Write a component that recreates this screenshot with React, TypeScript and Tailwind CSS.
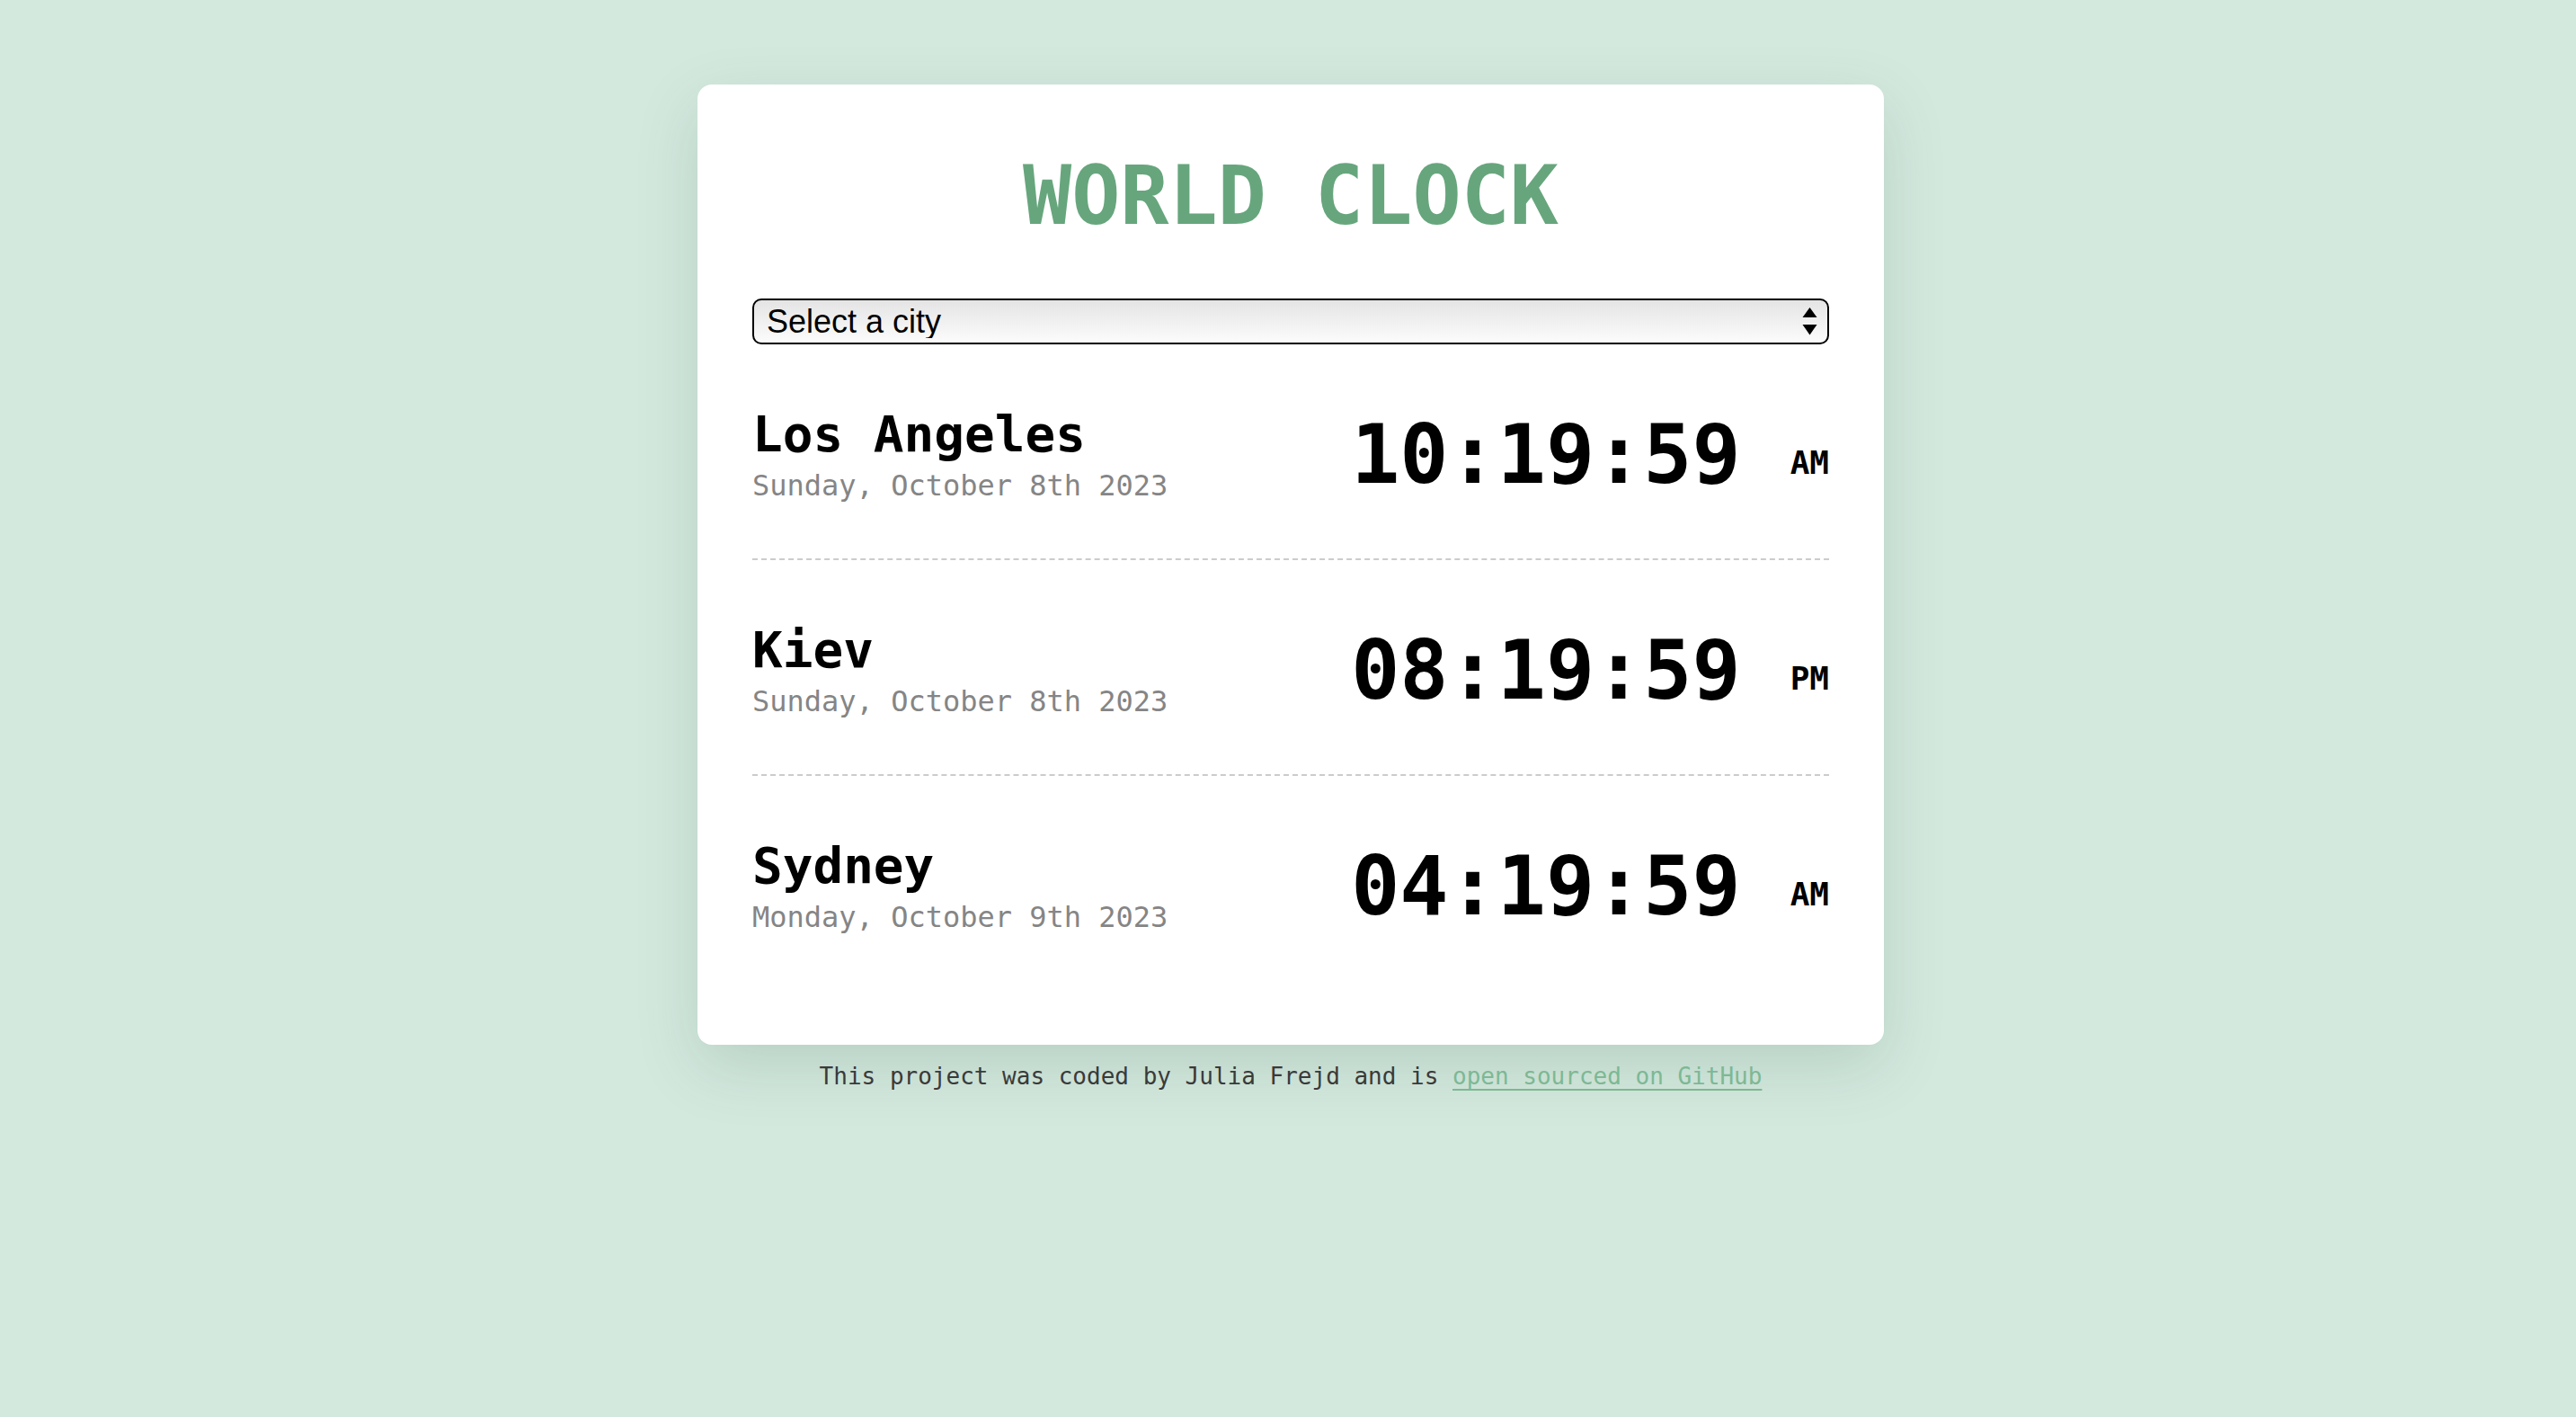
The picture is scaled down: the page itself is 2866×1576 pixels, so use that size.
import { useState } from 'react';

type City = {
  name: string;
  date: string;
  time: string;
  meridiem: 'AM' | 'PM';
};

// Fixed snapshot of the clocks, as shown in the screenshot.
const cities: City[] = [
  { name: 'Los Angeles', date: 'Sunday, October 8th 2023', time: '10:19:59', meridiem: 'AM' },
  { name: 'Kiev', date: 'Sunday, October 8th 2023', time: '08:19:59', meridiem: 'PM' },
  { name: 'Sydney', date: 'Monday, October 9th 2023', time: '04:19:59', meridiem: 'AM' },
];

const mono = "font-['DejaVu_Sans_Mono','Liberation_Mono',monospace]";

function CitySelect() {
  const [value, setValue] = useState('');

  return (
    <div className="relative mt-[60px] h-[51px]">
      <select
        value={value}
        onChange={(e) => setValue(e.target.value)}
        className="h-full w-full appearance-none rounded-[10px] border-2 border-black bg-gradient-to-b from-[#e4e4e4] to-[#fcfcfc] pl-[14px] pr-12 font-['Liberation_Sans',Arial,sans-serif] text-[36px] leading-none text-black outline-none"
      >
        <option value="">Select a city</option>
        <option value="paris">Paris</option>
        <option value="tokyo">Tokyo</option>
        <option value="new-york">New York</option>
      </select>
      {/* macOS style double arrow */}
      <svg
        className="pointer-events-none absolute right-[13px] top-[10px]"
        width="17"
        height="31"
        viewBox="0 0 17 31"
      >
        <path d="M8.5 0 L16.5 11 L0.5 11 Z" fill="#000" />
        <path d="M0.5 19 L16.5 19 L8.5 30.5 Z" fill="#000" />
      </svg>
    </div>
  );
}

function CityRow({ city, last }: { city: City; last: boolean }) {
  return (
    <div
      className={`flex items-center justify-between pt-[68px] pb-[61px] ${
        last ? '' : 'border-b-2 border-dashed border-[#cccccc]'
      }`}
    >
      <div className="flex flex-col">
        <div className="text-[56px] font-bold leading-[64px] text-black">{city.name}</div>
        <div className="mt-[5px] text-[32px] leading-[40px] text-[#858585]">{city.date}</div>
      </div>
      <div className="whitespace-nowrap text-black">
        <span className="text-[90px] font-bold leading-none">{city.time}</span>
        <span className="ml-[55px] align-[10px] text-[36px] font-bold leading-none">
          {city.meridiem}
        </span>
      </div>
    </div>
  );
}

export default function App() {
  return (
    <div className={`min-h-screen bg-[#d4e9de] pl-[6px] pt-[94px] ${mono}`}>
      <div className="mx-auto w-[1320px] rounded-[16px] bg-white px-[61px] pt-[70px] pb-[61px] shadow-[0_24px_70px_rgba(40,80,60,0.16)]">
        <h1 className="text-center text-[90px] font-bold leading-[108px] text-[#67a67d]">
          WORLD CLOCK
        </h1>

        <CitySelect />

        <div>
          {cities.map((city, i) => (
            <CityRow key={city.name} city={city} last={i === cities.length - 1} />
          ))}
        </div>
      </div>

      <footer className="mx-auto mt-[16px] text-center text-[26px] leading-[39px] text-[#3a3a3a]">
        This project was coded by Julia Frejd and is{' '}
        <a
          href="#"
          className="text-[#7db893] underline decoration-2 underline-offset-[5px]"
        >
          open sourced on GitHub
        </a>
      </footer>
    </div>
  );
}
